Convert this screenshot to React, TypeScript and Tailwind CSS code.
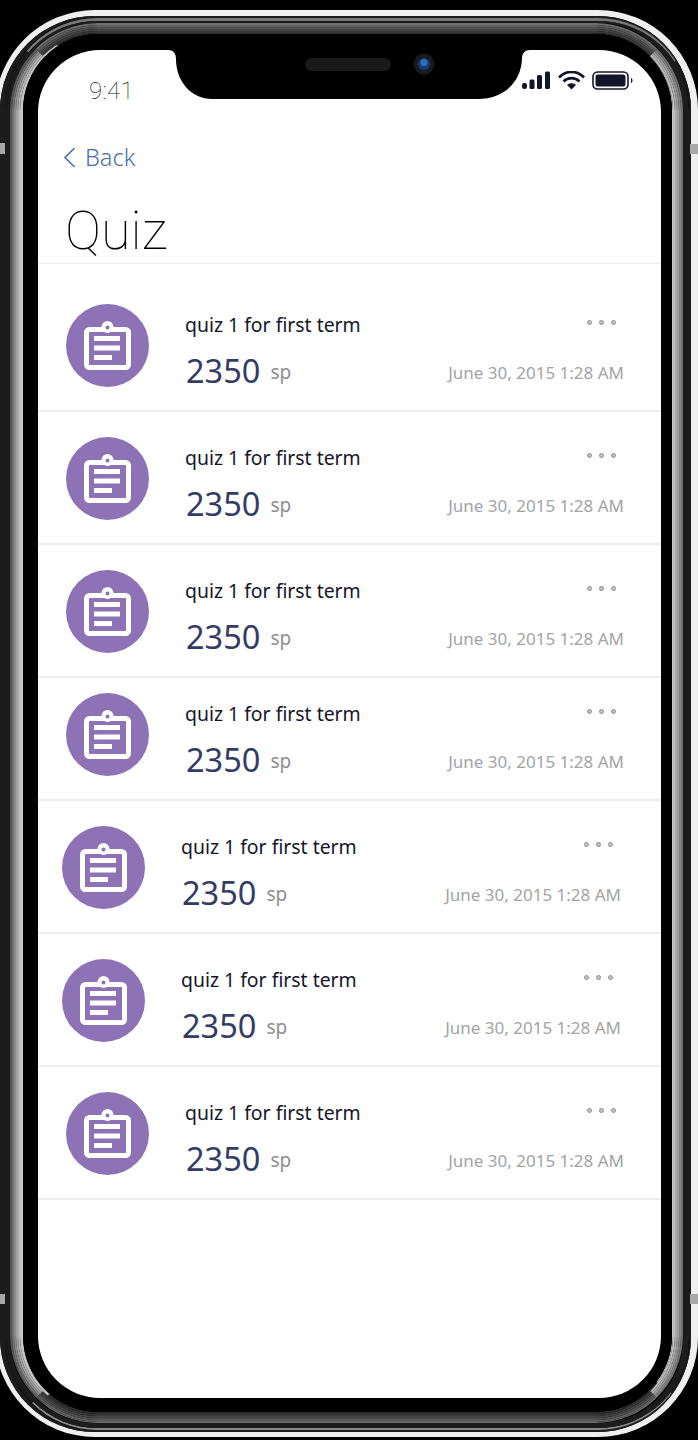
const rows = [
  { box: "h-[148px] pt-[40px] pl-[28px] pr-[37px]" },
  { box: "h-[133px] pt-[25px] pl-[28px] pr-[37px]" },
  { box: "h-[133px] pt-[25px] pl-[28px] pr-[37px]" },
  { box: "h-[123px] pt-[15px] pl-[28px] pr-[37px]" },
  { box: "h-[133px] pt-[25px] pl-[24px] pr-[40px]" },
  { box: "h-[133px] pt-[25px] pl-[24px] pr-[40px]" },
  { box: "h-[133px] pt-[25px] pl-[28px] pr-[37px]" },
];

function QuizIcon() {
  return (
    <svg viewBox="0 0 83 83" className="h-[83px] w-[83px] shrink-0">
      <circle cx="41.5" cy="41.5" r="41.5" fill="#8d73b6" />
      <rect x="20.5" y="25.5" width="42" height="38" rx="3" fill="none" stroke="#fff" strokeWidth="5" />
      <circle cx="41.5" cy="23" r="6" fill="#fff" />
      <circle cx="41.5" cy="23.5" r="2" fill="#8d73b6" />
      <rect x="28" y="32" width="26" height="5" fill="#fff" />
      <rect x="28" y="41.5" width="26" height="5" fill="#fff" />
      <rect x="28" y="51" width="18" height="5" fill="#fff" />
    </svg>
  );
}

function Row({ box }: { box: string }) {
  return (
    <div className={`flex border-b-2 border-[#eeeeee] ${box}`}>
      <QuizIcon />
      <div className="ml-[36px] flex flex-1 flex-col">
        <div className="flex h-[42px] items-center justify-between">
          <span className="text-[19.4px] leading-none text-[#16162a]">quiz 1 for first term</span>
          <span className="mb-[6px] mr-[8px] flex gap-[7px]">
            <i className="h-[5px] w-[5px] rounded-full border border-[#8f8f94] bg-[#c4c4c8]" />
            <i className="h-[5px] w-[5px] rounded-full border border-[#8f8f94] bg-[#c4c4c8]" />
            <i className="h-[5px] w-[5px] rounded-full border border-[#8f8f94] bg-[#c4c4c8]" />
          </span>
        </div>
        <div className="mt-[4px] flex items-center justify-between">
          <div className="flex items-center pl-[1px]">
            <span className="text-[32.5px] leading-[42px] text-[#343c66]">2350</span>
            <span className="mt-[1px] ml-[10px] text-[19px] leading-[24px] text-[#8e8e92]">sp</span>
          </div>
          <span className="mt-[3px] text-[17px] leading-[24px] text-[#a3a3a6]">June 30, 2015 1:28 AM</span>
        </div>
      </div>
    </div>
  );
}

function Notch() {
  return (
    <svg viewBox="0 0 362 49" className="absolute left-[130px] top-0 h-[49px] w-[362px]">
      <path
        d="M0 0H362C357 0 354 3 354 9C353 32 336 49 310 49H44C24 49 8 32 8 9C8 3 5 0 0 0Z"
        fill="#000"
      />
      <rect x="137" y="8" width="86" height="13" rx="6.5" fill="#191919" />
      <circle cx="256" cy="14" r="10.5" fill="#181a1e" />
      <circle cx="256" cy="14" r="6" fill="#123a6e" />
      <circle cx="256" cy="12.5" r="3.5" fill="#2f6fb8" />
    </svg>
  );
}

function StatusIcons() {
  return (
    <svg viewBox="0 0 112 19" className="h-[19px] w-[112px]" fill="#14142a">
      <rect x="0" y="12" width="5" height="6" rx="2.2" />
      <rect x="7.5" y="8.5" width="5" height="9.5" rx="1.5" />
      <rect x="15" y="4" width="5" height="14" rx="1.5" />
      <rect x="23" y="0.5" width="5" height="17.5" rx="1.5" />
      <path d="M37 6.5C44 -1 55 -1 62 6.5" fill="none" stroke="#14142a" strokeWidth="2.6" />
      <path d="M41.5 10.5C46 6 53 6 57.5 10.5" fill="none" stroke="#14142a" strokeWidth="2.6" />
      <path d="M45 14C47.5 11.8 51.5 11.8 54 14L49.5 18.5Z" />
      <rect x="71" y="1" width="35" height="17" rx="4.5" fill="none" stroke="#14142a" strokeWidth="1.6" />
      <rect x="73.5" y="3.5" width="30" height="12" rx="2.5" />
      <path d="M109 7C111 7.5 111 11.5 109 12Z" />
    </svg>
  );
}

export default function App() {
  return (
    <div
      className="relative h-[1440px] w-[698px] overflow-hidden bg-black pt-[10px] pb-[3px] [font-family:'Noto_Sans',sans-serif]"
    >
      {/* frame rings, outside in */}
      <div className="ml-[-5px] h-full rounded-[100px] border-t-[6px] border-r-[7px] border-b-[5px] border-l-[5px] border-[#efefef]">
        <div className="h-full rounded-[94px] border-t-[2px] border-r-[1px] border-b-[2px] border-l-[5px] border-[#1c1c1c]">
          <div className="h-full rounded-[92px] border-t-[3px] border-r-[1px] border-b-[2px] border-l-[2px] border-t-[#777777] border-r-[#1c1c1c] border-b-[#8a8a8a] border-l-[#1c1c1c]">
            <div className="h-full rounded-[90px] border-t-[2px] border-r-[6px] border-b-[5px] border-l-[3px] border-[#1c1c1c]">
              <div className="h-full rounded-[88px] border-x-[2px] border-t-[2px] border-b-[1px] border-t-[#6e6e6e] border-r-[#707070] border-b-[#6e6e6e] border-l-[#555555]">
                <div className="h-full rounded-[86px] border-x-[2px] border-y-[2px] border-t-[#5f5f5f] border-r-[#868686] border-b-[#5f5f5f] border-l-[#707070]">
                  <div className="h-full rounded-[84px] border-x-[2px] border-y-[2px] border-t-[#515151] border-r-[#9a9a9a] border-b-[#515151] border-l-[#8a8a8a]">
                    <div className="h-full rounded-[82px] border-x-[2px] border-y-[2px] border-t-[#444444] border-r-[#acacac] border-b-[#444444] border-l-[#a0a0a0]">
                      <div className="h-full rounded-[80px] border-x-[2px] border-y-[2px] border-t-[#383838] border-r-[#bcbcbc] border-b-[#383838] border-l-[#b4b4b4]">
                        <div className="h-full rounded-[78px] border-y-[2px] border-t-[1px] border-r-[1px] border-l-[3px] border-t-[#2c2c2c] border-r-[#c8c8c8] border-b-[#2c2c2c] border-l-[#c4c4c4]">
                          <div className="h-full rounded-[76px] bg-black pt-[16px] pr-[11px] pb-[14px] pl-[15px]">
                            {/* screen */}
                            <div className="relative h-full overflow-hidden rounded-[62px] bg-white">
                              <Notch />
                              <div className="flex h-[50px] justify-between pr-[27px] pl-[51px]">
                                <span className="mt-[27px] text-[24px] leading-[28px] font-thin tracking-[0.3px] text-[#14141e] [font-family:Roboto,sans-serif]">
                                  9:41
                                </span>
                                <span className="mt-[21px]">
                                  <StatusIcons />
                                </span>
                              </div>
                              <div className="mt-[42px] flex items-center pl-[25px]">
                                <svg viewBox="0 0 13 21" className="h-[21px] w-[13px]" fill="none">
                                  <path d="M11.5 1L2 10.5L11.5 20" stroke="#4a6fa8" strokeWidth="1.6" />
                                </svg>
                                <span className="ml-[9px] text-[23.5px] leading-[30px] font-light text-[#4a6fa8]">Back</span>
                              </div>
                              <h1 className="mt-[28px] h-[63px] pl-[27px] text-[54px] leading-[62px] font-thin text-black [font-family:Roboto,sans-serif]">
                                Quiz
                              </h1>
                              <div className="border-b border-[#eeeeee]" />
                              {rows.map((r, i) => (
                                <Row key={i} box={r.box} />
                              ))}
                            </div>
                          </div>
                        </div>
                      </div>
                    </div>
                  </div>
                </div>
              </div>
            </div>
          </div>
        </div>
      </div>
      {/* side buttons */}
      <div className="absolute left-0 top-[143px] h-[11px] w-[5px] bg-[#a8a8a8]" />
      <div className="absolute left-0 top-[1294px] h-[10px] w-[5px] bg-[#a8a8a8]" />
      <div className="absolute right-0 top-[144px] h-[10px] w-[8px] bg-[#a8a8a8]" />
      <div className="absolute right-0 top-[1294px] h-[10px] w-[8px] bg-[#a8a8a8]" />
    </div>
  );
}
